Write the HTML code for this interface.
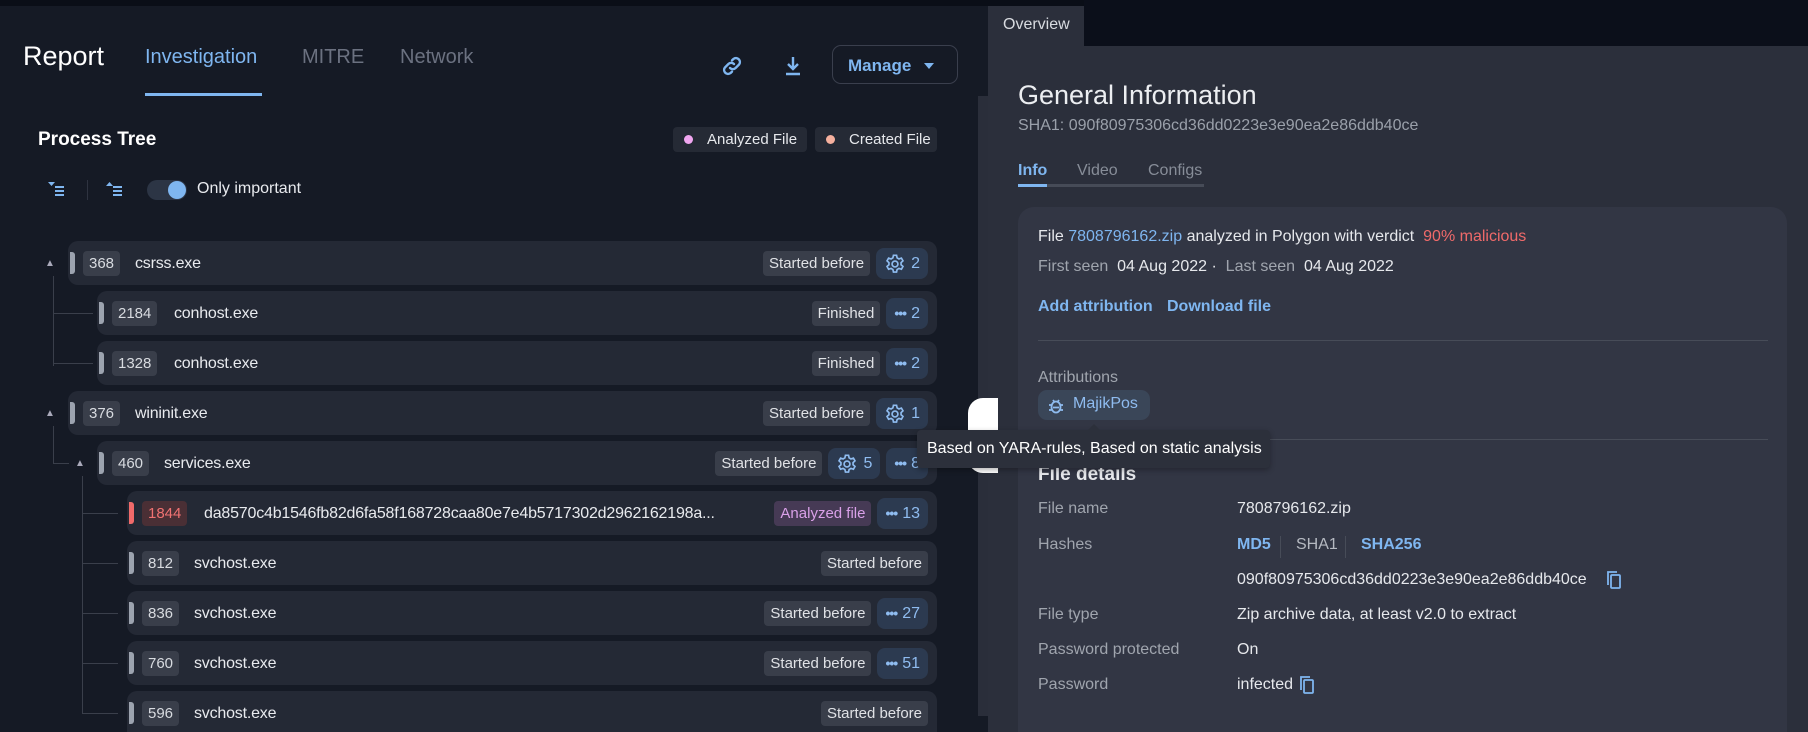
<!DOCTYPE html>
<html style="overflow:hidden"><head><meta charset="utf-8"><style>
*{box-sizing:border-box;margin:0;padding:0}
html,body{width:1808px;height:732px;overflow:hidden}
body{background:#151a25;font-family:"Liberation Sans",sans-serif;color:#e6e8ec;position:relative}
.a{position:absolute;white-space:nowrap}
.row{position:absolute;height:44px;background:#242935;border-radius:10px;right:871px}
.bar{position:absolute;left:2px;top:11px;width:5px;height:22px;background:#9ca3af;border-radius:0 3px 3px 0}
.pid{position:absolute;left:15px;top:10px;height:25px;padding:0 6px;background:#393e4a;border-radius:4px;font-size:15px;line-height:25px;color:#d8dbe0}
.nm{position:absolute;top:10px;line-height:25px;font-size:16px;color:#e8eaee;letter-spacing:-0.2px}
.tags{position:absolute;right:9px;top:7px;height:31px;display:flex;gap:6px;align-items:center}
.tg{height:25px;padding:0 6px;background:#393e4a;border-radius:4px;font-size:15px;line-height:25px;color:#e0e2e6}
.ct{height:31px;padding:0 8px;background:#2c3a50;border-radius:8px;font-size:16px;line-height:31px;color:#8fbcf0;display:flex;align-items:center;gap:5px}
.ct b{font-size:14px;letter-spacing:-1px}
.ln{position:absolute;background:#3a3f4b}
.lbl{color:#a0a5ae}
</style></head><body>
<div class="a" style="left:0;top:0;width:1808px;height:6px;background:#0a0e17"></div>
<div class="a" style="left:988px;top:0;width:820px;height:732px;background:#2b2f3b"></div>
<div class="a" style="left:1084px;top:0;width:724px;height:46px;background:#0b0f1a"></div>
<div class="a" style="left:988px;top:0;width:96px;height:6px;background:#0a0e17"></div>
<div class="a" style="left:1003px;top:16px;font-size:16px;color:#d8dbe0">Overview</div>
<div class="a" style="left:978px;top:96px;width:10px;height:620px;background:#2a2e3a"></div>

<div class="a" style="left:23px;top:41px;font-size:27px;color:#fff">Report</div>
<div class="a" style="left:145px;top:46px;font-size:20px;color:#7fb6f0">Investigation</div>
<div class="a" style="left:145px;top:93px;width:117px;height:3px;background:#7fb6f0"></div>
<div class="a" style="left:302px;top:46px;font-size:20px;color:#6b7180">MITRE</div>
<div class="a" style="left:400px;top:46px;font-size:20px;color:#6b7180">Network</div>
<svg class="a" style="left:720px;top:54px" width="24" height="24" viewBox="0 0 24 24" fill="none" stroke="#7fb6f0" stroke-width="2.4" stroke-linecap="round"><path d="M10 14a4 4 0 0 0 5.6 0l3.5-3.5a4 4 0 0 0-5.6-5.6L12 6.4"/><path d="M14 10a4 4 0 0 0-5.6 0L4.9 13.5a4 4 0 0 0 5.6 5.6L12 17.6"/></svg>
<svg class="a" style="left:782px;top:54px" width="22" height="24" viewBox="0 0 22 24" fill="none" stroke="#7fb6f0" stroke-width="2.4"><path d="M11 3v12M6 10l5 5 5-5M4 20h14"/></svg>
<div class="a" style="left:832px;top:45px;width:126px;height:39px;border:1px solid #3a3f4d;border-radius:9px"></div>
<div class="a" style="left:848px;top:56px;font-size:17px;font-weight:bold;color:#7fb6f0">Manage</div>
<div class="a" style="left:924px;top:63px;width:0;height:0;border-left:5px solid transparent;border-right:5px solid transparent;border-top:6px solid #7fb6f0"></div>

<div class="a" style="left:38px;top:129px;font-size:19px;font-weight:bold;color:#fff">Process Tree</div>
<div class="a" style="left:673px;top:127px;width:134px;height:25px;background:#252a35;border-radius:4px"></div>
<div class="a" style="left:684px;top:135px;width:9px;height:9px;border-radius:50%;background:#f0a6f0"></div>
<div class="a" style="left:707px;top:131px;font-size:15px;color:#e6e8ec">Analyzed File</div>
<div class="a" style="left:815px;top:127px;width:122px;height:25px;background:#252a35;border-radius:4px"></div>
<div class="a" style="left:826px;top:135px;width:9px;height:9px;border-radius:50%;background:#f5b09e"></div>
<div class="a" style="left:849px;top:131px;font-size:15px;color:#e6e8ec">Created File</div>

<svg class="a" style="left:47px;top:180px" width="20" height="18" viewBox="0 0 20 18" fill="#7fb6f0"><path d="M1 2h7l-3.5 4z"/><rect x="8" y="6" width="9" height="2"/><rect x="8" y="10" width="9" height="2"/><rect x="8" y="14" width="9" height="2"/></svg>
<div class="a" style="left:87px;top:180px;width:1px;height:20px;background:#2e3340"></div>
<svg class="a" style="left:105px;top:180px" width="20" height="18" viewBox="0 0 20 18" fill="#7fb6f0"><path d="M1 6h7l-3.5-4z"/><rect x="8" y="6" width="9" height="2"/><rect x="8" y="10" width="9" height="2"/><rect x="8" y="14" width="9" height="2"/></svg>
<div class="a" style="left:147px;top:180px;width:40px;height:20px;border-radius:10px;background:#2c3545"></div>
<div class="a" style="left:168px;top:181px;width:18px;height:18px;border-radius:50%;background:#7fb6f0"></div>
<div class="a" style="left:197px;top:180px;font-size:16px;color:#e8eaee">Only important</div>

<div class="ln" style="left:53px;top:276px;width:1px;height:90px"></div>
<div class="ln" style="left:53px;top:313px;width:40px;height:1px"></div>
<div class="ln" style="left:53px;top:363px;width:40px;height:1px"></div>
<div class="ln" style="left:53px;top:426px;width:1px;height:38px"></div>
<div class="ln" style="left:53px;top:463px;width:16px;height:1px"></div>
<div class="ln" style="left:82px;top:476px;width:1px;height:238px"></div>
<div class="ln" style="left:82px;top:513px;width:36px;height:1px"></div>
<div class="ln" style="left:82px;top:563px;width:36px;height:1px"></div>
<div class="ln" style="left:82px;top:613px;width:36px;height:1px"></div>
<div class="ln" style="left:82px;top:663px;width:36px;height:1px"></div>
<div class="ln" style="left:82px;top:713px;width:36px;height:1px"></div>
<div class="a" style="left:45px;top:258px;font-size:10px;color:#aab">▲</div>
<div class="a" style="left:45px;top:408px;font-size:10px;color:#aab">▲</div>
<div class="a" style="left:75px;top:458px;font-size:10px;color:#aab">▲</div>

<svg width="0" height="0" style="position:absolute"><defs><symbol id="g" viewBox="0 0 24 24"><g fill="none" stroke="#8fbcf0" stroke-width="1.8"><circle cx="12" cy="12" r="3.2"/><path d="M10.3 2.5h3.4l.6 2.8 2 1.2 2.7-.9 1.7 3-2.1 1.9v2.3l2.1 1.9-1.7 3-2.7-.9-2 1.2-.6 2.8h-3.4l-.6-2.8-2-1.2-2.7.9-1.7-3 2.1-1.9v-2.3L3.3 8.6l1.7-3 2.7.9 2-1.2z"/></g></symbol></defs></svg>

<div class="row" style="left:68px;top:241px"><div class="bar"></div><div class="pid">368</div><div class="nm" style="left:67px">csrss.exe</div><div class="tags"><div class="tg">Started before</div><div class="ct"><svg width="22" height="22"><use href="#g"/></svg>2</div></div></div>
<div class="row" style="left:97px;top:291px"><div class="bar"></div><div class="pid">2184</div><div class="nm" style="left:77px">conhost.exe</div><div class="tags"><div class="tg">Finished</div><div class="ct"><b>•••</b>2</div></div></div>
<div class="row" style="left:97px;top:341px"><div class="bar"></div><div class="pid">1328</div><div class="nm" style="left:77px">conhost.exe</div><div class="tags"><div class="tg">Finished</div><div class="ct"><b>•••</b>2</div></div></div>
<div class="row" style="left:68px;top:391px"><div class="bar"></div><div class="pid">376</div><div class="nm" style="left:67px">wininit.exe</div><div class="tags"><div class="tg">Started before</div><div class="ct"><svg width="22" height="22"><use href="#g"/></svg>1</div></div></div>
<div class="row" style="left:97px;top:441px"><div class="bar"></div><div class="pid">460</div><div class="nm" style="left:67px">services.exe</div><div class="tags"><div class="tg">Started before</div><div class="ct"><svg width="22" height="22"><use href="#g"/></svg>5</div><div class="ct"><b>•••</b>8</div></div></div>
<div class="row" style="left:127px;top:491px"><div class="bar" style="background:#f06a6a"></div><div class="pid" style="background:#4a2f35;color:#f07272">1844</div><div class="nm" style="left:77px">da8570c4b1546fb82d6fa58f168728caa80e7e4b5717302d2962162198a...</div><div class="tags"><div class="tg" style="background:#463a55;color:#d9a0e8">Analyzed file</div><div class="ct"><b>•••</b>13</div></div></div>
<div class="row" style="left:127px;top:541px"><div class="bar"></div><div class="pid">812</div><div class="nm" style="left:67px">svchost.exe</div><div class="tags"><div class="tg">Started before</div></div></div>
<div class="row" style="left:127px;top:591px"><div class="bar"></div><div class="pid">836</div><div class="nm" style="left:67px">svchost.exe</div><div class="tags"><div class="tg">Started before</div><div class="ct"><b>•••</b>27</div></div></div>
<div class="row" style="left:127px;top:641px"><div class="bar"></div><div class="pid">760</div><div class="nm" style="left:67px">svchost.exe</div><div class="tags"><div class="tg">Started before</div><div class="ct"><b>•••</b>51</div></div></div>
<div class="row" style="left:127px;top:691px;height:41px;border-radius:10px 10px 0 0"><div class="bar"></div><div class="pid">596</div><div class="nm" style="left:67px">svchost.exe</div><div class="tags"><div class="tg">Started before</div></div></div>

<div class="a" style="left:968px;top:398px;width:30px;height:75px;border-radius:15px 0 0 15px;background:#fff"></div>

<div class="a" style="left:1018px;top:80px;font-size:27px;color:#eceef1">General Information</div>
<div class="a" style="left:1018px;top:117px;font-size:16px;color:#9aa0aa">SHA1: 090f80975306cd36dd0223e3e90ea2e86ddb40ce</div>
<div class="a" style="left:1018px;top:162px;font-size:16px;font-weight:bold;color:#7fb6f0">Info</div>
<div class="a" style="left:1077px;top:162px;font-size:16px;color:#878d98">Video</div>
<div class="a" style="left:1148px;top:162px;font-size:16px;color:#878d98">Configs</div>
<div class="a" style="left:1018px;top:184px;width:186px;height:3px;background:#464b57"></div>
<div class="a" style="left:1018px;top:184px;width:29px;height:3px;background:#7fb6f0"></div>

<div class="a" style="left:1018px;top:207px;width:769px;height:525px;background:#323644;border-radius:16px 16px 0 0"></div>
<div class="a" style="left:1038px;top:228px;font-size:16px;color:#e6e8ec">File <span style="color:#7fb6f0">7808796162.zip</span> analyzed in Polygon with verdict &nbsp;<span style="color:#f06a6a">90% malicious</span></div>
<div class="a" style="left:1038px;top:258px;font-size:16px;color:#e6e8ec"><span class="lbl">First seen</span>&nbsp; 04 Aug 2022 · &nbsp;<span class="lbl">Last seen</span>&nbsp; 04 Aug 2022</div>
<div class="a" style="left:1038px;top:298px;font-size:16px;font-weight:bold;color:#7fb6f0">Add attribution</div>
<div class="a" style="left:1167px;top:298px;font-size:16px;font-weight:bold;color:#7fb6f0">Download file</div>
<div class="a" style="left:1038px;top:340px;width:730px;height:1px;background:#474c58"></div>
<div class="a" style="left:1038px;top:369px;font-size:16px;color:#a0a5ae">Attributions</div>
<div class="a" style="left:1038px;top:390px;width:112px;height:30px;background:#3a4658;border-radius:9px"></div>
<svg class="a" style="left:1048px;top:397px" width="16" height="17" viewBox="0 0 16 17" fill="none" stroke="#8fbcf0" stroke-width="1.8"><ellipse cx="8" cy="10" rx="4.5" ry="5.5"/><path d="M5 3l1.5 2M11 3 9.5 5M1 8h2.5M12.5 8H15M1 13h2.5M12.5 13H15M5 10.5h6"/></svg>
<div class="a" style="left:1073px;top:395px;font-size:16px;color:#8fbcf0">MajikPos</div>
<div class="a" style="left:1038px;top:439px;width:730px;height:1px;background:#474c58"></div>
<div class="a" style="left:1038px;top:464px;font-size:19px;font-weight:bold;color:#e6e8ec">File details</div>

<div class="a" style="left:917px;top:430px;width:353px;height:38px;background:#2c303b;border-radius:4px;box-shadow:0 2px 6px rgba(0,0,0,.3)"></div>
<div class="a" style="left:1088px;top:424px;width:0;height:0;border-left:6px solid transparent;border-right:6px solid transparent;border-bottom:6px solid #2c303b"></div>
<div class="a" style="left:927px;top:440px;font-size:16px;color:#fff">Based on YARA-rules, Based on static analysis</div>

<div class="a lbl" style="left:1038px;top:500px;font-size:16px">File name</div>
<div class="a" style="left:1237px;top:500px;font-size:16px">7808796162.zip</div>
<div class="a lbl" style="left:1038px;top:536px;font-size:16px">Hashes</div>
<div class="a" style="left:1237px;top:536px;font-size:16px;font-weight:bold;color:#7fb6f0">MD5</div>
<div class="a" style="left:1280px;top:536px;width:1px;height:22px;background:#474c58"></div>
<div class="a" style="left:1296px;top:536px;font-size:16px;color:#b5b9c1">SHA1</div>
<div class="a" style="left:1345px;top:536px;width:1px;height:22px;background:#474c58"></div>
<div class="a" style="left:1361px;top:536px;font-size:16px;font-weight:bold;color:#7fb6f0">SHA256</div>
<div class="a" style="left:1237px;top:571px;font-size:16px">090f80975306cd36dd0223e3e90ea2e86ddb40ce</div>
<svg class="a" style="left:1606px;top:570px" width="16" height="20" viewBox="0 0 16 20" fill="none" stroke="#7fb6f0" stroke-width="1.8"><path d="M2 15V2h9"/><rect x="5" y="5" width="9" height="13" rx="1"/></svg>
<div class="a lbl" style="left:1038px;top:606px;font-size:16px">File type</div>
<div class="a" style="left:1237px;top:606px;font-size:16px">Zip archive data, at least v2.0 to extract</div>
<div class="a lbl" style="left:1038px;top:641px;font-size:16px">Password protected</div>
<div class="a" style="left:1237px;top:641px;font-size:16px">On</div>
<div class="a lbl" style="left:1038px;top:676px;font-size:16px">Password</div>
<div class="a" style="left:1237px;top:676px;font-size:16px">infected</div>
<svg class="a" style="left:1299px;top:675px" width="16" height="20" viewBox="0 0 16 20" fill="none" stroke="#7fb6f0" stroke-width="1.8"><path d="M2 15V2h9"/><rect x="5" y="5" width="9" height="13" rx="1"/></svg>
</body></html>
